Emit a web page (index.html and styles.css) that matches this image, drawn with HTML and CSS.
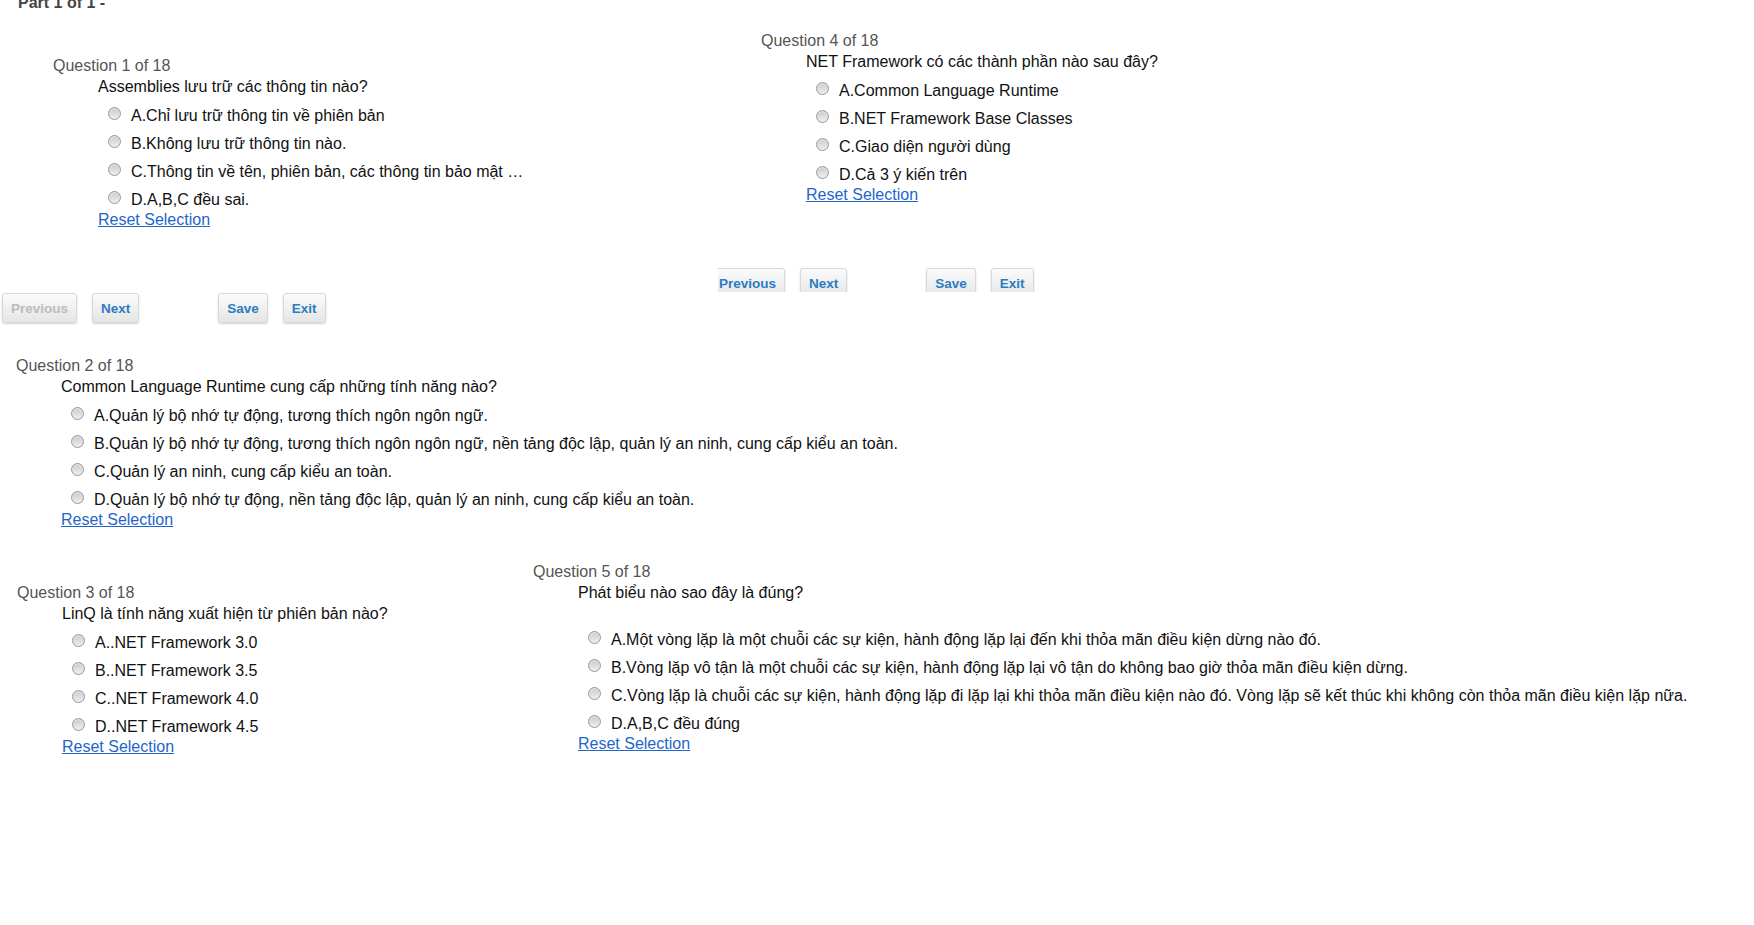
FILE: index.html
```html
<!DOCTYPE html>
<html lang="vi">
<head>
<meta charset="utf-8">
<title>Quiz - Part 1 of 1</title>
<link rel="stylesheet" href="styles.css">
</head>
<body>
<div class="top">
  <div class="col">
    <div class="part-title">Part 1 of 1 -</div>
    <div class="q q-first">
      <div class="q-label">Question 1 of 18</div>
      <div class="q-body">
        <div class="q-text">Assemblies lưu trữ các thông tin nào?</div>
        <div class="q-opts">
          <label class="opt"><input type="radio" name="q1" class="radio">A.Chỉ lưu trữ thông tin về phiên bản</label>
          <label class="opt"><input type="radio" name="q1" class="radio">B.Không lưu trữ thông tin nào.</label>
          <label class="opt"><input type="radio" name="q1" class="radio">C.Thông tin về tên, phiên bản, các thông tin bảo mật …</label>
          <label class="opt"><input type="radio" name="q1" class="radio">D.A,B,C đều sai.</label>
        </div>
        <div class="reset"><a href="#">Reset Selection</a></div>
      </div>
    </div>
    <div class="btn-bar">
      <button class="btn" disabled>Previous</button>
      <button class="btn">Next</button>
      <button class="btn btn-gap">Save</button>
      <button class="btn">Exit</button>
    </div>
  </div>
  <div class="col-clip">
    <div class="col-body">
      <div class="q q-first">
        <div class="q-label">Question 4 of 18</div>
        <div class="q-body">
          <div class="q-text">NET Framework có các thành phần nào sau đây?</div>
          <div class="q-opts">
            <label class="opt"><input type="radio" name="q4" class="radio">A.Common Language Runtime</label>
            <label class="opt"><input type="radio" name="q4" class="radio">B.NET Framework Base Classes</label>
            <label class="opt"><input type="radio" name="q4" class="radio">C.Giao diện người dùng</label>
            <label class="opt"><input type="radio" name="q4" class="radio">D.Cả 3 ý kiến trên</label>
          </div>
          <div class="reset"><a href="#">Reset Selection</a></div>
        </div>
      </div>
      <div class="btn-bar">
        <button class="btn">Previous</button>
        <button class="btn">Next</button>
        <button class="btn btn-gap">Save</button>
        <button class="btn">Exit</button>
      </div>
    </div>
  </div>
</div>

<div class="q q-two">
  <div class="q-label">Question 2 of 18</div>
  <div class="q-body">
    <div class="q-text">Common Language Runtime cung cấp những tính năng nào?</div>
    <div class="q-opts">
      <label class="opt"><input type="radio" name="q2" class="radio">A.Quản lý bộ nhớ tự động, tương thích ngôn ngôn ngữ.</label>
      <label class="opt"><input type="radio" name="q2" class="radio">B.Quản lý bộ nhớ tự động, tương thích ngôn ngôn ngữ, nền tảng độc lập, quản lý an ninh, cung cấp kiểu an toàn.</label>
      <label class="opt"><input type="radio" name="q2" class="radio">C.Quản lý an ninh, cung cấp kiểu an toàn.</label>
      <label class="opt"><input type="radio" name="q2" class="radio">D.Quản lý bộ nhớ tự động, nền tảng độc lập, quản lý an ninh, cung cấp kiểu an toàn.</label>
    </div>
    <div class="reset"><a href="#">Reset Selection</a></div>
  </div>
</div>

<div class="bottom">
  <div class="q q-three">
    <div class="q-label">Question 3 of 18</div>
    <div class="q-body">
      <div class="q-text">LinQ là tính năng xuất hiện từ phiên bản nào?</div>
      <div class="q-opts">
        <label class="opt"><input type="radio" name="q3" class="radio">A..NET Framework 3.0</label>
        <label class="opt"><input type="radio" name="q3" class="radio">B..NET Framework 3.5</label>
        <label class="opt"><input type="radio" name="q3" class="radio">C..NET Framework 4.0</label>
        <label class="opt"><input type="radio" name="q3" class="radio">D..NET Framework 4.5</label>
      </div>
      <div class="reset"><a href="#">Reset Selection</a></div>
    </div>
  </div>
  <div class="q q-five">
    <div class="q-label">Question 5 of 18</div>
    <div class="q-body">
      <div class="q-text">Phát biểu nào sao đây là đúng?</div>
      <div class="q-opts q-opts-spaced">
        <label class="opt"><input type="radio" name="q5" class="radio">A.Một vòng lặp là một chuỗi các sự kiện, hành động lặp lại đến khi thỏa mãn điều kiện dừng nào đó.</label>
        <label class="opt"><input type="radio" name="q5" class="radio">B.Vòng lặp vô tận là một chuỗi các sự kiện, hành động lặp lại vô tận do không bao giờ thỏa mãn điều kiện dừng.</label>
        <label class="opt"><input type="radio" name="q5" class="radio">C.Vòng lặp là chuỗi các sự kiện, hành động lặp đi lặp lại khi thỏa mãn điều kiện nào đó. Vòng lặp sẽ kết thúc khi không còn thỏa mãn điều kiện lặp nữa.</label>
        <label class="opt"><input type="radio" name="q5" class="radio">D.A,B,C đều đúng</label>
      </div>
      <div class="reset"><a href="#">Reset Selection</a></div>
    </div>
  </div>
</div>
</body>
</html>
```

FILE: styles.css
```css
html, body {
  background: #ffffff;
}

body {
  margin: 0;
  font-family: "Liberation Sans", Arial, sans-serif;
  font-size: 16px;
  color: #111111;
}

.top {
  display: flex;
  align-items: flex-start;
}

.col {
  width: 718px;
  flex: none;
}

.col-clip {
  flex: 1;
  height: 292px;
  overflow: hidden;
}

.col-body {
  display: flow-root;
  margin: -13px 0 0 -10px;
}

.part-title {
  margin-top: -6px;
  padding-left: 18px;
  line-height: 18px;
  font-weight: bold;
  color: #444444;
}

.q-label {
  line-height: 21px;
  color: #555555;
}

.q-body {
  margin-left: 45px;
}

.q-text {
  line-height: 21px;
  color: #111111;
}

.q-opts {
  margin-top: 5px;
}

.q-opts-spaced {
  margin-top: 23px;
}

.opt {
  display: block;
  padding-left: 10px;
  line-height: 28px;
  color: #111111;
  white-space: nowrap;
}

.radio {
  -webkit-appearance: none;
  appearance: none;
  box-sizing: border-box;
  width: 13px;
  height: 13px;
  margin: 0 10px 0 0;
  vertical-align: 1px;
  border: 1px solid #989898;
  border-radius: 50%;
  background: linear-gradient(#cacaca, #efefef);
  box-shadow: inset 0 1px 1px rgba(255, 255, 255, 0.5);
}

.reset {
  margin-top: -4px;
  line-height: 20px;
}

.reset a {
  color: #1f66c9;
  text-decoration: underline;
}

.q-first {
  margin-top: 43px;
  padding-left: 53px;
}

.btn-bar {
  display: flex;
  gap: 15px;
  margin-top: 63px;
  padding-left: 2px;
}

.btn {
  box-sizing: border-box;
  height: 30px;
  padding: 0 8px;
  font-family: "Liberation Sans", Arial, sans-serif;
  font-size: 13.5px;
  font-weight: bold;
  color: #2b7cc2;
  background: linear-gradient(#fbfbfb, #e5e5e5);
  border: 1px solid #d8d8d8;
  border-radius: 3px;
  box-shadow: 0 1px 2px rgba(0, 0, 0, 0.18);
  cursor: pointer;
}

.btn:disabled {
  color: #bcbcbc;
  cursor: default;
}

.btn-gap {
  margin-left: 64px;
}

.q-two {
  margin-top: 32px;
  padding-left: 16px;
}

.bottom {
  display: flex;
  align-items: flex-start;
  margin-top: 31px;
}

.q-three {
  width: 516px;
  flex: none;
  margin-top: 21px;
  padding-left: 17px;
  box-sizing: border-box;
}

.q-five {
  padding-left: 17px;
}
```
